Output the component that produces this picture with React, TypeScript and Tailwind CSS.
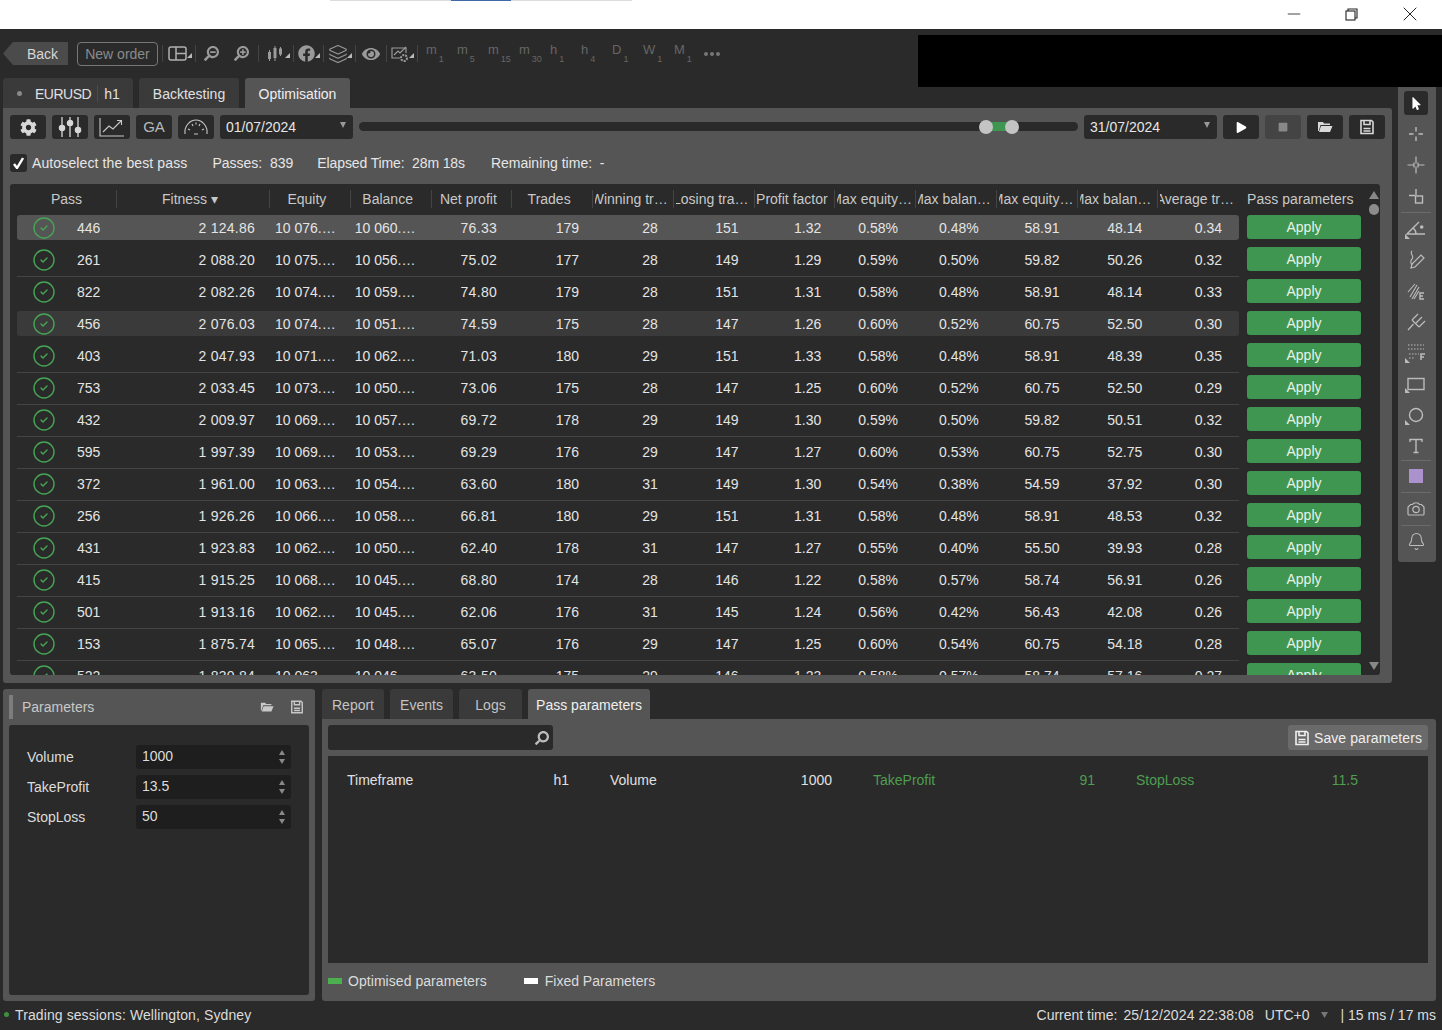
import type { ReactNode } from 'react';
import { Bell, CircleCheck, Layers, Minus, X } from 'lucide-react';
import { FaCog, FaEye, FaFacebook, FaMousePointer, FaPlay, FaSearch, FaSearchMinus, FaSearchPlus, FaStop } from 'react-icons/fa';

const rows = [
  ['446', '2 124.86', '10 076.…', '10 060.…', '76.33', '179', '28', '151', '1.32', '0.58%', '0.48%', '58.91', '48.14', '0.34'],
  ['261', '2 088.20', '10 075.…', '10 056.…', '75.02', '177', '28', '149', '1.29', '0.59%', '0.50%', '59.82', '50.26', '0.32'],
  ['822', '2 082.26', '10 074.…', '10 059.…', '74.80', '179', '28', '151', '1.31', '0.58%', '0.48%', '58.91', '48.14', '0.33'],
  ['456', '2 076.03', '10 074.…', '10 051.…', '74.59', '175', '28', '147', '1.26', '0.60%', '0.52%', '60.75', '52.50', '0.30'],
  ['403', '2 047.93', '10 071.…', '10 062.…', '71.03', '180', '29', '151', '1.33', '0.58%', '0.48%', '58.91', '48.39', '0.35'],
  ['753', '2 033.45', '10 073.…', '10 050.…', '73.06', '175', '28', '147', '1.25', '0.60%', '0.52%', '60.75', '52.50', '0.29'],
  ['432', '2 009.97', '10 069.…', '10 057.…', '69.72', '178', '29', '149', '1.30', '0.59%', '0.50%', '59.82', '50.51', '0.32'],
  ['595', '1 997.39', '10 069.…', '10 053.…', '69.29', '176', '29', '147', '1.27', '0.60%', '0.53%', '60.75', '52.75', '0.30'],
  ['372', '1 961.00', '10 063.…', '10 054.…', '63.60', '180', '31', '149', '1.30', '0.54%', '0.38%', '54.59', '37.92', '0.30'],
  ['256', '1 926.26', '10 066.…', '10 058.…', '66.81', '180', '29', '151', '1.31', '0.58%', '0.48%', '58.91', '48.53', '0.32'],
  ['431', '1 923.83', '10 062.…', '10 050.…', '62.40', '178', '31', '147', '1.27', '0.55%', '0.40%', '55.50', '39.93', '0.28'],
  ['415', '1 915.25', '10 068.…', '10 045.…', '68.80', '174', '28', '146', '1.22', '0.58%', '0.57%', '58.74', '56.91', '0.26'],
  ['501', '1 913.16', '10 062.…', '10 045.…', '62.06', '176', '31', '145', '1.24', '0.56%', '0.42%', '56.43', '42.08', '0.26'],
  ['153', '1 875.74', '10 065.…', '10 048.…', '65.07', '176', '29', '147', '1.25', '0.60%', '0.54%', '60.75', '54.18', '0.28'],
  ['522', '1 830.84', '10 063.…', '10 046.…', '63.50', '175', '29', '146', '1.23', '0.58%', '0.57%', '58.74', '57.16', '0.27'],
];

// right padding of each data column, Fitness onwards
const cellPad = ['pr-[15px] tracking-[0.25px]', 'pr-[15px]', 'pr-[16px]', 'pr-[15px] tracking-[0.35px]', 'pr-[14px]', 'pr-[16px]', 'pr-[16px]', 'pr-[14px]', 'pr-[18px]', 'pr-[18px]', 'pr-[18px]', 'pr-[16px]', 'pr-[17px]'];

// labels too long for their column are cut on the left, as the app does
const headers = [
  { label: 'Pass', cls: 'justify-center' },
  { label: 'Fitness ▾', cls: 'justify-center pr-[6px]' },
  { label: 'Equity', cls: 'justify-center pr-[6px]' },
  { label: 'Balance', cls: 'justify-center pr-[6px]' },
  { label: 'Net profit', cls: 'justify-center pr-[6px]' },
  { label: 'Trades', cls: 'justify-center pr-[6px]' },
  { label: 'Winning tr…', cls: 'justify-end ml-[2px] pr-[5px]' },
  { label: 'Losing tra…', cls: 'justify-end ml-[2px] pr-[5px]' },
  { label: 'Profit factor', cls: 'justify-center pr-[5px]' },
  { label: 'Max equity…', cls: 'justify-end ml-[2px] pr-[3px]' },
  { label: 'Max balan…', cls: 'justify-end ml-[2px] pr-[5px]' },
  { label: 'Max equity…', cls: 'justify-end ml-[2px] pr-[3px]' },
  { label: 'Max balan…', cls: 'justify-end ml-[2px] pr-[6px]' },
  { label: 'Average tr…', cls: 'justify-end ml-[2px] pr-[5px]' },
];

const timeframes = [['m', '1'], ['m', '5'], ['m', '15'], ['m', '30'], ['h', '1'], ['h', '4'], ['D', '1'], ['W', '1'], ['M', '1']];

const gridCols = 'grid grid-cols-[100px_153px_repeat(12,80.75px)] w-[1222px]';

function Corner({ left }: { left?: boolean }) {
  return (
    <svg width="5" height="5" viewBox="0 0 5 5" className={left ? 'absolute left-[7px] bottom-[6px]' : 'absolute right-[3px] bottom-[8px]'}>
      <path d={left ? 'M0 0L5 5H0Z' : 'M5 0V5H0Z'} fill="#bbb" />
    </svg>
  );
}

function Sep() {
  return <div className="w-px h-[17px] bg-[#444] shrink-0" />;
}

function ToolIcon({ className, corner, children }: { className: string; corner?: boolean; children: ReactNode }) {
  return (
    <div className={`relative h-[24px] flex items-center justify-center text-[#9a9a9a] shrink-0 ${className}`}>
      {children}
      {corner && <Corner />}
    </div>
  );
}

function SaveIcon({ size = 16 }: { size?: number }) {
  return (
    <svg width={size} height={size} viewBox="0 0 16 16" fill="none" stroke="currentColor" strokeWidth="1.6">
      <path d="M2 1.5h10.5l1.5 1.5v11.5H2Z" />
      <path d="M5 1.5v4h6v-4" />
      <path d="M4.5 9.5h7M4.5 12h7" />
    </svg>
  );
}

function FolderIcon({ size = 16 }: { size?: number }) {
  return (
    <svg width={size} height={size} viewBox="0 0 16 16" fill="currentColor">
      <path d="M1 3h5l1 1.5h6V6H3.5L1.8 12H1Z" />
      <path d="M4 7h11.5L13 13H2Z" />
    </svg>
  );
}

function DarkButton({ className = 'bg-[#2a2a2a] text-[#d8d8d8]', children }: { className?: string; children: ReactNode }) {
  return <div className={`w-[36px] h-[24px] rounded-[3px] flex items-center justify-center shrink-0 ${className}`}>{children}</div>;
}

function DateBox({ value }: { value: string }) {
  return (
    <div className="w-[133px] h-[24px] shrink-0 rounded-[3px] bg-[#2a2a2a] flex items-center justify-between pl-[6px] pr-[7px] text-[#e6e6e6]">
      <span>{value}</span>
      <svg width="6" height="6" viewBox="0 0 6 6" className="mb-[5px]"><path d="M0 0H6L3 6Z" fill="#999" /></svg>
    </div>
  );
}

function SideCell({ h, line, children, corner }: { h: string; line?: boolean; corner?: boolean; children: ReactNode }) {
  return (
    <>
      <div className={`relative w-[36px] flex items-center justify-center text-[#bcbcbc] ${h}`}>
        {children}
        {corner && <Corner left />}
      </div>
      {line && <div className="h-px w-[30px] ml-[3px] -mb-px bg-[#6b6b6b]" />}
    </>
  );
}

function Thin({ children }: { children: ReactNode }) {
  return (
    <svg width="20" height="20" viewBox="0 0 20 20" fill="none" stroke="currentColor" strokeWidth="1.4">
      {children}
    </svg>
  );
}

function Sidebar() {
  return (
    <div className="w-[38px] h-[475px] mt-[58px] ml-[6px] rounded-b-[3px] bg-[#555]">
      <SideCell h="h-[32px]">
        <div className="w-[24px] h-[24px] rounded-[3px] bg-[#2a2a2a] flex items-center justify-center text-white">
          <FaMousePointer size={13} />
        </div>
      </SideCell>
      <SideCell h="h-[30px]"><Thin><path d="M10 3v4.500M10 12.500V17M3 10h4.500M12.500 10H17" /></Thin></SideCell>
      <SideCell h="h-[32px]"><Thin><path d="M10 1.500v7M10 11.500v7M1.500 10h7M11.500 10h7M8 7.500v5M12 7.500v5" strokeWidth="1.200" /></Thin></SideCell>
      <SideCell h="h-[31px]" line><Thin><path d="M10 2v6M3 8.500h6" /><rect x="9.500" y="9" width="7" height="7" /></Thin></SideCell>
      <SideCell h="h-[33px]" corner>
        <Thin><path d="M19 15H1L13 3M7 9c2 1.500 3 4 3 6" /><circle cx="15.700" cy="8" r="1.800" fill="currentColor" stroke="none" /></Thin>
      </SideCell>
      <SideCell h="h-[30px]"><Thin><path d="M6 1c-3 3 3 5 0 8-2 2-1 5 0 6" strokeWidth="1.100" /><path d="M5 18l1-4 9-9 3 3-9 9Z" strokeWidth="1.200" /></Thin></SideCell>
      <SideCell h="h-[32px]">
        <svg width="20" height="20" viewBox="0 0 20 20" fill="none" stroke="currentColor" strokeWidth="1.100">
          <path d="M2 11L9 3M4 16L11 4M6 18L13 6M8 18L13 10" />
          <path d="M18 12h-4v6h4M14 15h3" strokeWidth="1.400" />
        </svg>
      </SideCell>
      <SideCell h="h-[30px]"><Thin><path d="M2 18l5.500-6M6 8l7 7M6 8l6-6M9.500 11.500L16 5M13 15l6-6" strokeWidth="1.200" /></Thin></SideCell>
      <SideCell h="h-[32px]" corner>
        <svg width="20" height="20" viewBox="0 0 20 20" fill="none" stroke="currentColor" strokeWidth="1.100">
          <path d="M2 2h16M2 6h16M3 11h10M3 15h6" strokeDasharray="1.500 1.500" />
          <path d="M19 11h-4v6M15 14h3" strokeWidth="1.500" />
        </svg>
      </SideCell>
      <SideCell h="h-[30px]" corner><Thin><rect x="2" y="4.500" width="16" height="11" /></Thin></SideCell>
      <SideCell h="h-[32px]" corner><Thin><circle cx="10" cy="10" r="6.500" /></Thin></SideCell>
      <SideCell h="h-[29px]" line><Thin><path d="M4 6V3.500h12V6M10 3.500V16.500M7.500 16.500h5" /></Thin></SideCell>
      <SideCell h="h-[32px]" line><div className="w-[14px] h-[14px] bg-[#ac92cc]" /></SideCell>
      <SideCell h="h-[33px]" line>
        <Thin><path d="M2 15V8l2.500-2.500h2L8 4h4l1.500 1.500h2L18 8v7a1 1 0 0 1-1 1H3a1 1 0 0 1-1-1Z" strokeWidth="1.200" /><circle cx="10" cy="10.500" r="3.200" strokeWidth="1.200" /></Thin>
      </SideCell>
      <SideCell h="h-[32px]"><Bell size={19} strokeWidth={1.3} /></SideCell>
    </div>
  );
}

function Row({ row, index }: { row: string[]; index: number }) {
  const bg = index === 0 ? 'bg-[#555]' : index === 3 ? 'bg-[#3a3a3a]' : '';
  // the separator is not drawn next to a highlighted row
  const noLine = index === 0 || index === 2 || index === 3;
  return (
    <>
      <div className="flex h-[25px] shrink-0">
        <div className={`${gridCols} rounded-[3px] items-center text-[#e4e4e4] ${bg}`}>
          <div className="flex items-center pl-[15px]">
            <CircleCheck size={24} strokeWidth={1.4} className="text-[#46a556]" />
            <span className="ml-[21px]">{row[0]}</span>
          </div>
          {row.slice(1).map((cell, i) => (
            <div key={i} className={`text-right whitespace-nowrap ${cellPad[i]}`}>{cell}</div>
          ))}
        </div>
        <div className="ml-[8px] w-[114px] h-[24px] pb-[1px] rounded-[3px] bg-[#3f9650] text-[#e8f2e8] flex items-center justify-center">Apply</div>
      </div>
      <div className="h-[7px] shrink-0 pt-[4px]">
        <div className={`w-[1222px] h-px ${noLine ? '' : 'bg-[#444]'}`} />
      </div>
    </>
  );
}

function ParamField({ label, value }: { label: string; value: string }) {
  return (
    <div className="flex items-center h-[24px] pl-[18px]">
      <div className="w-[109px] text-[#dcdcdc]">{label}</div>
      <div className="w-[155px] h-[24px] rounded-[3px] bg-[#1e1e1e] flex items-center justify-between pl-[6px] pr-[5px] text-[#dcdcdc]">
        <span className="-mt-[2px]">{value}</span>
        <svg width="8" height="16" viewBox="0 0 8 16" fill="#888"><path d="M4 1L7 6H1ZM4 15L1 10H7Z" /></svg>
      </div>
    </div>
  );
}

function ResultPair({ label, value, green }: { label: string; value: string; green?: boolean }) {
  return (
    <div className={`w-[222px] flex justify-between ${green ? 'text-[#4f9d50]' : 'text-[#e0e0e0]'}`}>
      <span>{label}</span>
      <span>{value}</span>
    </div>
  );
}

export default function App() {
  return (
    <div className="relative w-[1442px] h-[1030px] overflow-hidden bg-[#2a2a2a] text-[14px] leading-[18px] font-['Liberation_Sans',Arial,sans-serif]">
      {/* window title bar */}
      <div className="h-[29px] bg-white relative">
        <div className="flex ml-[330px] h-px">
          <div className="w-[121px] bg-[#dcdcdc]" />
          <div className="w-[60px] bg-[#3f6aa8]" />
          <div className="w-[121px] bg-[#dcdcdc]" />
        </div>
        <div className="absolute right-[3px] top-0 flex h-[28px] items-center text-[#222]">
          <div className="w-[58px] flex justify-center"><Minus size={20} strokeWidth={1} /></div>
          <div className="w-[58px] pr-[2px] flex justify-center">
            <svg width="13" height="13" viewBox="0 0 13 13" fill="none" stroke="currentColor" strokeWidth="1.100"><rect x="1" y="3" width="9" height="9" /><path d="M3 3V1h9v9h-2" /></svg>
          </div>
          <div className="w-[58px] flex justify-center"><X size={24} strokeWidth={1} /></div>
        </div>
      </div>

      {/* black block from the source capture */}
      <div className="absolute left-[918px] top-[35px] right-0 h-[52px] bg-black" />

      <div className="flex h-[654px] pl-[3px]">
        <div className="w-[1389px]">
          {/* chart toolbar */}
          <div className="h-[49px] pt-[13px] flex items-center">
            <div className="w-[65px] h-[23px] mb-[13px] bg-[#4b4b4b] text-[#d8d8d8] flex items-center pl-[24px] [clip-path:polygon(0_50%,10px_0,100%_0,100%_100%,10px_100%)]">Back</div>
            <div className="ml-[9px] mb-[13px] w-[81px] h-[24px] rounded-[4px] border border-[#777] text-[#8a8a8a] flex items-center justify-center">New order</div>
            <div className="flex items-center mb-[13px]">
              <div className="w-[4px]" />
              <Sep />
              <ToolIcon className="w-[32px]" corner>
                <svg width="19" height="15" viewBox="0 0 19 15" fill="none" stroke="#b0b0b0" strokeWidth="1.500" className="-ml-[3px]"><rect x="1" y="1" width="17" height="13" rx="2" /><path d="M8 1v13M8 7.500h10" /></svg>
              </ToolIcon>
              <Sep />
              <ToolIcon className="w-[30px]"><FaSearchMinus size={15} className="scale-x-[-1]" /></ToolIcon>
              <ToolIcon className="w-[30px]"><FaSearchPlus size={15} className="scale-x-[-1]" /></ToolIcon>
              <div className="w-[2px]" />
              <Sep />
              <ToolIcon className="w-[34px]" corner>
                <svg width="16" height="18" viewBox="0 0 16 18" fill="currentColor" stroke="currentColor" strokeWidth="1" className="-ml-[3px]">
                  <path d="M2.500 5v11M8 1v15M13.500 2v9" fill="none" />
                  <rect x="1.500" y="7.500" width="2" height="6" />
                  <rect x="7" y="3.500" width="2" height="9" />
                  <rect x="12.500" y="4" width="2" height="5" />
                </svg>
              </ToolIcon>
              <Sep />
              <ToolIcon className="w-[29px]" corner><FaFacebook size={17} className="-ml-[4px]" /></ToolIcon>
              <Sep />
              <ToolIcon className="w-[31px]" corner><Layers size={20} strokeWidth={1.3} className="-ml-[3px]" /></ToolIcon>
              <Sep />
              <ToolIcon className="w-[30px]"><FaEye size={18} className="-ml-[1px]" /></ToolIcon>
              <Sep />
              <ToolIcon className="w-[30px]" corner>
                <svg width="19" height="18" viewBox="0 0 19 18" fill="none" stroke="currentColor" strokeWidth="1.200" className="-ml-[4px]">
                  <path d="M9 13H1V3h14v5" />
                  <path d="M3 10l4-4 2 2 6-6" />
                  <circle cx="13" cy="13" r="3" strokeWidth="2" strokeDasharray="2 1" />
                </svg>
              </ToolIcon>
              <Sep />
              <div className="flex pl-[2px] text-[#666]">
                {timeframes.map(([t, n], i) => (
                  <div key={i} className="w-[31px] pl-[6px] flex items-start h-[24px]">
                    <span className="text-[13px] leading-[16px]">{t}</span>
                    <span className="text-[9px] leading-[10px] mt-[12px] ml-[2px]">{n}</span>
                  </div>
                ))}
              </div>
              <div className="ml-[5px] flex gap-[2px]">
                <span className="w-[4px] h-[4px] rounded-full bg-[#777]" />
                <span className="w-[4px] h-[4px] rounded-full bg-[#777]" />
                <span className="w-[4px] h-[4px] rounded-full bg-[#777]" />
              </div>
            </div>
          </div>

          {/* tabs */}
          <div className="flex h-[30px] gap-[6px]">
            <div className="w-[130px] pt-[1px] rounded-t-[3px] bg-[#3a3a3a] flex items-center pl-[14px] text-[#e0e0e0]">
              <span className="w-[5px] h-[5px] rounded-full bg-[#888]" />
              <span className="ml-[13px] tracking-[-0.5px]">EURUSD</span>
              <span className="ml-[6px] w-px h-[17px] bg-[#4c4c4c]" />
              <span className="ml-[6px]">h1</span>
            </div>
            <div className="w-[100px] pt-[1px] rounded-t-[3px] bg-[#3a3a3a] flex items-center justify-center text-[#e0e0e0]">Backtesting</div>
            <div className="w-[105px] pt-[1px] rounded-t-[3px] bg-[#555] flex items-center justify-center text-[#efefef]">Optimisation</div>
          </div>

          {/* optimisation panel */}
          <div className="h-[575px] rounded-b-[3px] rounded-tr-[3px] bg-[#555] pl-[7px] pt-[7px]">
            <div className="flex items-center gap-[6px] h-[24px] text-[#d0d0d0]">
              <DarkButton><FaCog size={17} /></DarkButton>
              <DarkButton>
                <svg width="24" height="20" viewBox="0 0 24 20" fill="none" stroke="#d8d8d8" strokeWidth="1.300">
                  <path d="M4 0v20M12 0v20M20 0v20" />
                  <circle cx="4" cy="11" r="2.600" fill="#d8d8d8" />
                  <circle cx="12" cy="6" r="2.600" fill="#d8d8d8" />
                  <circle cx="20" cy="13" r="2.600" fill="#d8d8d8" />
                </svg>
              </DarkButton>
              <DarkButton>
                <svg width="26" height="20" viewBox="0 0 26 20" fill="none" stroke="#c8c8c8" strokeWidth="1.100">
                  <path d="M1 1v18h24" />
                  <path d="M4 15l6-6 4 3 8-8" />
                  <path d="M18 3.500h4.500V8" />
                </svg>
              </DarkButton>
              <DarkButton className="bg-[#2a2a2a] text-[15px] text-[#b8b8b8]">GA</DarkButton>
              <DarkButton>
                <svg width="26" height="18" viewBox="0 0 26 18" fill="none" stroke="#c8c8c8" strokeWidth="1.100">
                  <path d="M2 16C1 8 7 2 13 2s12 6 11 14" />
                  <path d="M11 16h4M5 11l2 1M21 11l-2 1M9 6l1 2M17 6l-1 2M13 4.500v2" />
                </svg>
              </DarkButton>
              <DateBox value="01/07/2024" />
              <div className="relative w-[719px] h-[9px] -mt-[1px] rounded-full bg-[#2a2a2a] shrink-0">
                <div className="absolute left-[627px] w-[26px] h-[9px] bg-[#3f9650]" />
                <div className="absolute left-[620px] top-[-2.500px] w-[14px] h-[14px] rounded-full bg-[#c4c4c4]" />
                <div className="absolute left-[646px] top-[-2.500px] w-[14px] h-[14px] rounded-full bg-[#c4c4c4]" />
              </div>
              <DateBox value="31/07/2024" />
              <DarkButton className="bg-[#2a2a2a] text-white"><FaPlay size={11} /></DarkButton>
              <DarkButton className="bg-[#444] text-[#888]"><FaStop size={10} /></DarkButton>
              <DarkButton><FolderIcon /></DarkButton>
              <DarkButton><SaveIcon /></DarkButton>
            </div>

            <div className="flex items-center h-[18px] mt-[15px] text-[#e6e6e6]">
              <div className="w-[17px] h-[18px] rounded-[3px] bg-[#2a2a2a] flex items-center justify-center text-white">
                <svg width="11" height="12" viewBox="0 0 11 12" fill="none" stroke="currentColor" strokeWidth="2.400"><path d="M1 7l3 4 6-10" /></svg>
              </div>
              <span className="ml-[5px] tracking-[0.12px]">Autoselect the best pass</span>
              <span className="ml-[25px]">Passes:&nbsp; 839</span>
              <span className="ml-[24px] tracking-[-0.12px]">Elapsed Time:&nbsp; 28m 18s</span>
              <span className="ml-[26px]">Remaining time:&nbsp; -</span>
            </div>

            {/* results table */}
            <div className="flex w-[1370px] h-[491px] mt-[12px] rounded-[3px] bg-[#2a2a2a] overflow-hidden">
              <div className="w-[1354px] pl-[7px] flex flex-col shrink-0">
                <div className="flex h-[31px] pb-[2px] shrink-0 items-center text-[#c8c8c8]">
                  <div className={gridCols}>
                    {headers.map((h, i) => (
                      <div key={i} className={i < headers.length - 1 ? 'border-r border-[#444]' : ''}>
                        <div className={`flex overflow-hidden h-[18px] ${h.cls}`}>
                          <span className="shrink-0 whitespace-nowrap">{h.label}</span>
                        </div>
                      </div>
                    ))}
                  </div>
                  <div className="ml-[8px] whitespace-nowrap tracking-[0.05px]">Pass parameters</div>
                </div>
                {rows.map((row, i) => (
                  <Row key={row[0]} row={row} index={i} />
                ))}
              </div>
              <div className="w-[16px] ml-[3px] pt-[7px] pb-[5px] flex flex-col items-center">
                <svg width="10" height="8" viewBox="0 0 10 8"><path d="M5 0L10 8H0Z" fill="#888" /></svg>
                <div className="mt-[5px] w-[10px] h-[11px] rounded-full bg-[#8c8c8c]" />
                <div className="flex-1" />
                <svg width="10" height="8" viewBox="0 0 10 8"><path d="M0 0H10L5 8Z" fill="#888" /></svg>
              </div>
            </div>
          </div>
        </div>
        <Sidebar />
      </div>

      {/* lower panels */}
      <div className="flex mt-[6px] pl-[3px] gap-[7px] h-[312px]">
        <div className="w-[312px] rounded-[3px] bg-[#555] pl-[6px] pr-[6px]">
          <div className="h-[36px] flex items-center text-[#c8c8c8]">
            <div className="w-[4px] h-[24px] [background-image:radial-gradient(#aaa_0.600px,transparent_0.800px)] [background-size:2px_2px]" />
            <span className="ml-[9px]">Parameters</span>
            <div className="flex-1" />
            <span className="mr-[16px]"><FolderIcon size={14} /></span>
            <span className="mr-[5px]"><SaveIcon size={14} /></span>
          </div>
          <div className="h-[270px] rounded-[3px] bg-[#2a2a2a] pt-[20px] flex flex-col gap-[6px]">
            <ParamField label="Volume" value="1000" />
            <ParamField label="TakeProfit" value="13.5" />
            <ParamField label="StopLoss" value="50" />
          </div>
        </div>

        <div className="w-[1114px] flex flex-col">
          <div className="flex h-[30px] shrink-0 text-[#c4c4c4]">
            <div className="w-[62px] pt-[1px] rounded-t-[3px] bg-[#3a3a3a] flex items-center justify-center">Report</div>
            <div className="ml-[6px] w-[63px] pt-[1px] rounded-t-[3px] bg-[#3a3a3a] flex items-center justify-center">Events</div>
            <div className="ml-[6px] w-[63px] pt-[1px] rounded-t-[3px] bg-[#3a3a3a] flex items-center justify-center">Logs</div>
            <div className="ml-[6px] w-[122px] pt-[1px] rounded-t-[3px] bg-[#555] flex items-center justify-center text-[#efefef]">Pass parameters</div>
          </div>
          <div className="flex-1 rounded-b-[3px] rounded-tr-[3px] bg-[#555] px-[6px] pt-[6px] pr-[8px]">
            <div className="flex h-[25px] justify-between">
              <div className="w-[225px] rounded-[3px] bg-[#2a2a2a] flex items-center justify-end pr-[4px] text-[#bdbdbd]">
                <FaSearch size={14} className="scale-x-[-1]" />
              </div>
              <div className="w-[140px] rounded-[3px] bg-[#6a6a6a] flex items-center justify-center gap-[4px] text-[#efefef]">
                <SaveIcon size={16} />
                <span className="tracking-[0.1px]">Save parameters</span>
              </div>
            </div>
            <div className="h-[207px] mt-[6px] bg-[#2a2a2a] pl-[19px] pt-[15px] flex gap-[41px]">
              <ResultPair label="Timeframe" value="h1" />
              <ResultPair label="Volume" value="1000" />
              <ResultPair label="TakeProfit" value="91" green />
              <ResultPair label="StopLoss" value="11.5" green />
            </div>
            <div className="flex items-center h-[36px] text-[#dcdcdc]">
              <span className="w-[14px] h-[6px] bg-[#4caf50]" />
              <span className="ml-[6px] tracking-[0.05px]">Optimised parameters</span>
              <span className="ml-[37px] w-[14px] h-[6px] bg-white" />
              <span className="ml-[7px]">Fixed Parameters</span>
            </div>
          </div>
        </div>
      </div>

      {/* status bar */}
      <div className="flex items-center h-[29px] pb-[2px] text-[#dcdcdc] pl-[4px] pr-[6px]">
        <span className="w-[5px] h-[5px] rounded-full bg-[#3f8f3f]" />
        <span className="ml-[6px] tracking-[0.1px]">Trading sessions: Wellington, Sydney</span>
        <div className="flex-1" />
        <span>Current time:</span>
        <span className="ml-[6px] tracking-[0.1px]">25/12/2024 22:38:08</span>
        <span className="ml-[11px]">UTC+0</span>
        <svg width="7" height="6" viewBox="0 0 7 6" className="ml-[11px]"><path d="M0 0H7L3.500 6Z" fill="#777" /></svg>
        <span className="ml-[13px]">| 15 ms / 17 ms</span>
      </div>
    </div>
  );
}
